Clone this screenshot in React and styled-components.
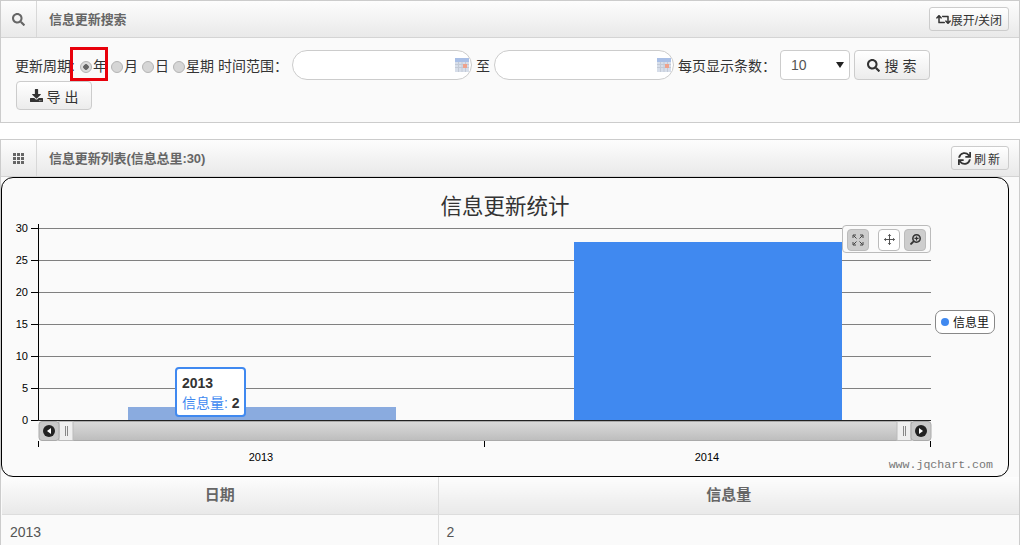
import React from 'react';
import styled, { createGlobalStyle } from 'styled-components';
import { FaSearch, FaRetweet, FaDownload, FaSync, FaSearchPlus } from 'react-icons/fa';

const Global = createGlobalStyle`
  html, body { margin: 0; padding: 0; background: #fff; overflow: hidden; }
  body { font-family: "Liberation Sans", "Noto Sans CJK SC", sans-serif; font-size: 14px; color: #333; }
  * { box-sizing: border-box; }
`;

const Page = styled.div`
  width: 1020px;
  height: 545px;
  overflow: hidden;
  display: flex;
  flex-direction: column;
  gap: 16px;
`;
const Panel = styled.section`
  border: 1px solid #ccc;
  border-bottom-width: ${p => (p.$open ? 0 : 1)}px;
  background: #fafafa;
  flex: none;
`;
const PanelHeader = styled.header`
  height: 37px;
  display: flex;
  align-items: center;
  border-bottom: 1px solid #d4d4d4;
  background: linear-gradient(#fdfdfd, #e9e9e9);
`;
const HeaderIcon = styled.div`
  width: 36px;
  height: 100%;
  display: flex;
  align-items: center;
  justify-content: center;
  border-right: 1px solid #d8d8d8;
  color: #666;
  font-size: 13px;
  padding-right: 1px;
`;
const HeaderTitle = styled.h2`
  margin: 0 0 2px 12px;
  flex: 1;
  font-size: 13px;
  letter-spacing: -0.08px;
  font-weight: bold;
  color: #666;
`;
const SmallButton = styled.button`
  height: 24px;
  margin-right: 10px;
  padding: 0 6px;
  display: flex;
  align-items: center;
  gap: ${p => p.$gap || 0}px;
  font: inherit;
  font-size: 12px;
  letter-spacing: ${p => p.$spacing || 0}px;
  color: #333;
  border: 1px solid #ccc;
  border-radius: 3px;
  background: linear-gradient(#fff, #ececec);
  white-space: nowrap;
`;
const SearchForm = styled.form`
  position: relative;
  margin: 0;
  height: 84px;
  padding: 12px 0 0 14px;
  display: flex;
  flex-wrap: wrap;
  align-content: flex-start;
`;
const Row = styled.div`
  width: 100%;
  height: 30px;
  margin-bottom: 1px;
  display: flex;
  align-items: center;
  white-space: nowrap;
`;
const FieldLabel = styled.span`
  font-size: 14px;
  color: #333;
  margin-left: ${p => p.$left || 0}px;
`;
const Radio = styled.input.attrs({ type: 'radio', name: 'cycle' })`
  appearance: none;
  width: 12px;
  height: 12px;
  margin: 4px 1px 0 ${p => p.$left || 4}px;
  border-radius: 50%;
  border: 1px solid #b4b4b4;
  background: #d6d6d6;
  &:checked {
    background: radial-gradient(circle, #666 0 2.5px, #dcdcdc 3px);
  }
`;
const DateField = styled.div`
  position: relative;
  width: 180px;
  height: 30px;
  margin-left: ${p => p.$left}px;
  border: 1px solid #ccc;
  border-radius: 15px;
  background: #fff;
  flex: none;
`;
const DateInput = styled.input`
  width: 100%;
  height: 100%;
  border: 0;
  padding: 0 24px 0 12px;
  background: transparent;
  outline: none;
`;
const CalendarMark = styled.svg`
  position: absolute;
  right: 2px;
  top: 7px;
`;
const SelectWrap = styled.div`
  position: relative;
  width: 70px;
  height: 30px;
  margin-left: 4px;
  flex: none;
  &::after {
    content: '';
    position: absolute;
    right: 6px;
    top: 12px;
    border: 4px solid transparent;
    border-top: 6px solid #222;
    border-bottom: 0;
  }
`;
const PageSelect = styled.select`
  appearance: none;
  width: 100%;
  height: 100%;
  padding-left: 10px;
  border: 1px solid #ccc;
  border-radius: 4px;
  background: #fff;
  font: inherit;
  font-size: 14px;
  color: #555;
`;
const ActionButton = styled.button`
  width: 76px;
  height: ${p => p.$h || 30}px;
  margin-left: ${p => p.$left || 0}px;
  padding: 0 0 0 4px;
  display: flex;
  align-items: center;
  justify-content: center;
  gap: 4px;
  flex: none;
  font: inherit;
  font-size: 14px;
  letter-spacing: 4px;
  color: #333;
  border: 1px solid #ccc;
  border-radius: 4px;
  background: linear-gradient(#fff, #ececec);
`;
const HighlightBox = styled.div`
  position: absolute;
  left: 69px;
  top: 9px;
  width: 38px;
  height: 34px;
  border: 3px solid #e8000b;
  pointer-events: none;
`;
const ChartBox = styled.div`
  position: relative;
  width: 1008px;
  height: 300px;
  border: 1.5px solid #000;
  border-radius: 12px;
  background: #fafafa;
  overflow: hidden;
`;
const ChartSvg = styled.svg`
  position: absolute;
  left: -1.5px;
  top: -1.5px;
  display: block;
`;
const ChartTools = styled.div`
  position: absolute;
  left: 840px;
  top: 46.5px;
  width: 89px;
  height: 28px;
  padding: 3px 4px;
  display: flex;
  gap: 4px;
  border: 1px solid #bbb;
  border-radius: 4px;
  background: #fafafa;
`;
const ToolButton = styled.div`
  width: 22px;
  height: 22px;
  margin-left: ${p => p.$left || 0}px;
  display: flex;
  align-items: center;
  justify-content: center;
  border: 1px solid #bbb;
  border-radius: 4px;
  background: ${p => (p.$active ? '#cdcdcd' : '#fff')};
  color: #333;
  font-size: 10px;
`;
const Legend = styled.div`
  position: absolute;
  left: 933px;
  top: 131.5px;
  width: 60px;
  height: 24px;
  display: flex;
  align-items: center;
  gap: 4px;
  padding-left: 5px;
  border: 1px solid #888;
  border-radius: 7px;
  background: #fff;
  font-size: 12px;
  color: #111;
`;
const LegendDot = styled.span`
  width: 8px;
  height: 8px;
  border-radius: 50%;
  background: #4089f0;
`;
const Tooltip = styled.div`
  position: absolute;
  left: 173px;
  top: 188.5px;
  width: 71px;
  height: 50px;
  padding: 4px 0 0 5px;
  border: 2px solid #4089f0;
  border-radius: 4px;
  background: #fff;
  font-size: 14px;
  line-height: 20px;
  white-space: nowrap;
`;
const TooltipTitle = styled.div`
  font-weight: bold;
  color: #333;
`;
const TooltipName = styled.span`
  color: #4089f0;
`;
const TooltipValue = styled.b`
  color: #333;
`;
const DataTable = styled.table`
  width: 1017px;
  margin-left: 1px;
  border-collapse: collapse;
  table-layout: fixed;
`;
const Th = styled.th`
  height: 37px;
  padding: 0 0 4px;
  font-size: 15px;
  font-weight: bold;
  color: #666;
  background: linear-gradient(#fdfdfd, #e9e9e9);
  border-bottom: 1px solid #ddd;
  border-left: ${p => (p.$divider ? '1px solid #ddd' : '0')};
`;
const Td = styled.td`
  height: 36px;
  padding: 0 8px;
  font-size: 14px;
  color: #555;
  border-left: ${p => (p.$divider ? '1px solid #ddd' : '0')};
`;

const Calendar = () => (
  <CalendarMark width="14" height="14" viewBox="0 0 14 14">
    <rect x="0" y="0" width="14" height="14" fill="#d7deea" />
    <rect x="0" y="0" width="14" height="4" fill="#a9bfe6" />
    <path d="M0 6.5H14M0 9.5H14M3.5 4V14M7 4V14M10.5 4V14" stroke="#c3cad6" strokeWidth="1" />
    <rect x="8" y="6" width="4" height="4" fill="#eea28d" />
  </CalendarMark>
);

const GridIcon = () => (
  <svg width="11" height="11" viewBox="0 0 11 11" fill="#666">
    {[0, 4, 8].flatMap(y => [0, 4, 8].map(x => <rect key={`${x}-${y}`} x={x} y={y} width="3" height="3" />))}
  </svg>
);

const gridY = [228, 260, 292, 324, 356, 388];
const labels = [30, 25, 20, 15, 10, 5, 0];

const ScrollEnd = ({ x, dir }) => (
  <g>
    <rect x={x} y="421.5" width="20" height="19" rx="3" fill="#c9c9c9" stroke="#aaa" />
    <circle cx={x + 10} cy="431" r="6" fill="#222" />
    <path d={dir < 0 ? `M${x + 12} 428V434L${x + 8} 431Z` : `M${x + 8} 428V434L${x + 12} 431Z`} fill="#fff" />
  </g>
);
const ScrollGrip = ({ x }) => (
  <g>
    <rect x={x} y="421.5" width="14" height="19" fill="#efefef" stroke="#bbb" />
    <path d={`M${x + 6.5} 426V436M${x + 8.5} 426V436`} stroke="#888" />
  </g>
);

const Chart = () => (
  <ChartSvg width="1008" height="300" viewBox="1 177 1008 300">
    <defs>
      <linearGradient id="track" x1="0" y1="0" x2="0" y2="1">
        <stop offset="0" stopColor="#dadada" />
        <stop offset="1" stopColor="#bdbdbd" />
      </linearGradient>
    </defs>
    <text x="505" y="214" textAnchor="middle" fontSize="21.5" fill="#333" fontFamily='"Noto Sans CJK SC", sans-serif'>信息更新统计</text>
    {gridY.map(y => <path key={y} d={`M39 ${y + 0.5}H931`} stroke="#808080" />)}
    <rect x="128" y="407" width="268" height="13" fill="#8aabdf" />
    <rect x="574" y="242" width="268" height="178" fill="#4089f0" />
    {labels.map((l, i) => (
      <g key={l}>
        <path d={`M31 ${228.5 + i * 32}H39`} stroke="#000" />
        <text x="28" y={232 + i * 32} textAnchor="end" fontSize="11" fill="#000" fontFamily='"Liberation Sans", sans-serif'>{l}</text>
      </g>
    ))}
    <path d="M38.5 224V421" stroke="#000" />
    <path d="M38 420.5H931" stroke="#222" />
    <rect x="59" y="421.5" width="852" height="19" fill="url(#track)" stroke="#aaa" />
    <ScrollGrip x={59} />
    <ScrollGrip x={897} />
    <ScrollEnd x={39} dir={-1} />
    <ScrollEnd x={911} dir={1} />
    <path d="M38.5 441V447M484.5 441V447M930.5 441V447" stroke="#000" />
    <text x="261" y="461" textAnchor="middle" fontSize="11" fill="#000" fontFamily='"Liberation Sans", sans-serif'>2013</text>
    <text x="707" y="461" textAnchor="middle" fontSize="11" fill="#000" fontFamily='"Liberation Sans", sans-serif'>2014</text>
    <text x="993" y="468" textAnchor="end" fontSize="11.6" fill="#777" fontFamily='"Liberation Mono", monospace'>www.jqchart.com</text>
  </ChartSvg>
);

const FitIcon = () => (
  <svg width="12" height="12" viewBox="0 0 12 12" fill="none" stroke="#444" strokeWidth="1">
    <path d="M1 4V1H4M8 1H11V4M11 8V11H8M4 11H1V8M1.5 1.5L4.5 4.5M10.5 1.5L7.5 4.5M10.5 10.5L7.5 7.5M1.5 10.5L4.5 7.5" />
  </svg>
);
const PanIcon = () => (
  <svg width="11" height="11" viewBox="0 0 12 12" fill="none" stroke="#444" strokeWidth="1">
    <path d="M6 0.5V11.5M0.5 6H11.5M4.5 2L6 .5L7.5 2M4.5 10L6 11.5L7.5 10M2 4.5L.5 6L2 7.5M10 4.5L11.5 6L10 7.5" />
  </svg>
);
const ZoomIcon = styled(FaSearchPlus)`
  transform: scaleX(-1);
  font-size: 11px;
`;

export default function App() {
  return (
    <>
      <Global />
      <Page>
        <Panel>
          <PanelHeader>
            <HeaderIcon><FaSearch /></HeaderIcon>
            <HeaderTitle>信息更新搜索</HeaderTitle>
            <SmallButton><FaRetweet size={15} />展开/关闭</SmallButton>
          </PanelHeader>
          <SearchForm>
            <Row>
              <FieldLabel>更新周期:</FieldLabel>
              <Radio $left={5} defaultChecked />
              <FieldLabel>年</FieldLabel>
              <Radio $left={4} />
              <FieldLabel>月</FieldLabel>
              <Radio $left={4} />
              <FieldLabel>日</FieldLabel>
              <Radio $left={4} />
              <FieldLabel>星期</FieldLabel>
              <FieldLabel $left={4}>时间范围：</FieldLabel>
              <DateField $left={4}><DateInput /><Calendar /></DateField>
              <FieldLabel $left={4}>至</FieldLabel>
              <DateField $left={4}><DateInput /><Calendar /></DateField>
              <FieldLabel $left={4}>每页显示条数：</FieldLabel>
              <SelectWrap>
                <PageSelect defaultValue="10"><option>10</option><option>20</option></PageSelect>
              </SelectWrap>
              <ActionButton $left={4} type="button"><FaSearch size={13} />搜索</ActionButton>
            </Row>
            <ActionButton $left={1} $h={29} type="button"><FaDownload size={13} />导出</ActionButton>
            <HighlightBox />
          </SearchForm>
        </Panel>
        <Panel $open>
          <PanelHeader>
            <HeaderIcon><GridIcon /></HeaderIcon>
            <HeaderTitle>信息更新列表(信息总里:30)</HeaderTitle>
            <SmallButton $gap={3} $spacing={2}><FaSync size={13} />刷新</SmallButton>
          </PanelHeader>
          <ChartBox>
            <Chart />
            <ChartTools>
              <ToolButton $active><FitIcon /></ToolButton>
              <ToolButton $left={5}><PanIcon /></ToolButton>
              <ToolButton $active><ZoomIcon /></ToolButton>
            </ChartTools>
            <Legend><LegendDot />信息里</Legend>
            <Tooltip>
              <TooltipTitle>2013</TooltipTitle>
              <TooltipName>信息量: </TooltipName><TooltipValue>2</TooltipValue>
            </Tooltip>
          </ChartBox>
          <DataTable>
            <colgroup><col style={{ width: 436 }} /><col /></colgroup>
            <thead><tr><Th>日期</Th><Th $divider>信息量</Th></tr></thead>
            <tbody><tr><Td>2013</Td><Td $divider>2</Td></tr></tbody>
          </DataTable>
        </Panel>
      </Page>
    </>
  );
}
